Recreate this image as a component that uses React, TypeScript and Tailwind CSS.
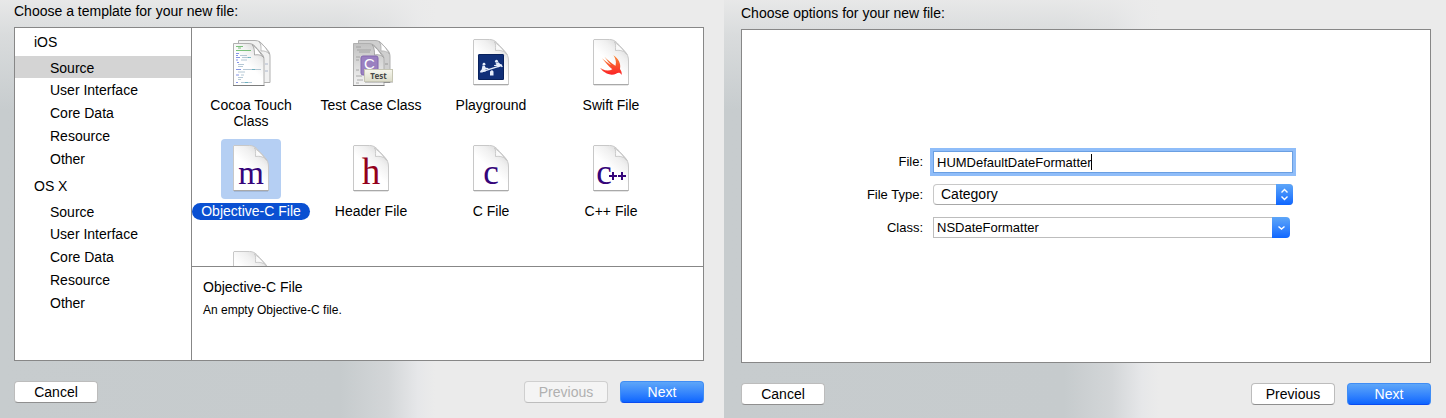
import type { ReactNode } from "react";

const BACKDROP =
  "bg-[linear-gradient(to_bottom,rgba(235,235,235,0.9)_0px,rgba(235,235,235,0.5)_35px,rgba(235,235,235,0)_110px),linear-gradient(to_right,#c7ccce_0px,#c6cbcd_340px,#d3d6d8_388px,#e6e7e9_418px,#ebebeb_435px)]";

function Page() {
  return (
    <g>
      <path
        d="M13 6.5H28.5C33 6.5 35.5 9 38.5 12.5L44 18.5C46.500 21.500 47.500 23.500 47.500 28V51.500H12.500V7Z"
        fill="url(#paper)"
        stroke="#c8c8c8"
      />
      <path d="M12.500 51.500H47.500" stroke="#a9a9a9" />
      <path d="M13 52.500H47" stroke="#000" strokeOpacity=".1" />
      <path
        d="M33.500 9C35 11 34.500 13 34.500 17.500C39 17 43 17.500 46 21.500L39.500 14Z"
        fill="#fafafa"
        stroke="#c0c0c0"
        strokeWidth=".8"
      />
    </g>
  );
}

function Stack({ dark }: { dark?: boolean }) {
  const line = dark ? "#8c8c8c" : "#9fabc4";
  return (
    <g>
      <path
        d="M17.500 7.500H34C38 7.500 40 9.500 42 12L46 16.500C48.500 19 49 21 49 24V49.500H17.500Z"
        fill={dark ? "#cfcfcf" : "#f1f1f1"}
        stroke="#b0b0b0"
      />
      <path d="M38 8.500C40.500 11.500 40 14.500 40 18C43 17.500 46 18.500 48.500 21L44 14Z" fill="#fff" stroke="#a4a4a4" strokeWidth=".7" />
      <path d="M44 31H47M44 38H47" stroke={line} strokeWidth=".8" />
      <path
        d="M12.500 10.500H28C32 10.500 34 13 36 15.500L40 20C42.500 22.500 43 24 43 27V52.500H12.500Z"
        fill={dark ? "url(#greyPaper)" : "url(#paper)"}
        stroke="#b0b0b0"
      />
      <path d="M12 52.500H43.500" stroke="#7d7d7d" />
      <path
        d="M31 11.500C33.500 14.500 33.500 18 33.500 22C37 21.500 40 21.500 42.500 24.500L36.500 16.500Z"
        fill="#fff"
        stroke="#989898"
        strokeWidth=".8"
      />
    </g>
  );
}

function CocoaIcon() {
  return (
    <g>
      <Stack />
      <g strokeWidth=".9" strokeOpacity=".8" fill="none">
        <path d="M15 13.500H22M17 15H20M15 17.500H30" stroke="#48ad48" />
        <path d="M15 20.500H18M15 22.500H17M15 24.500H19M15 27H17M16 29.500H18M15 36.500H20M15 42H18M15 49.500H17" stroke="#5368dc" />
        <path d="M19 22.500H26M21 24.500H28M20 27H26M17 31.500H23M17 33.500H22M22 36.500H40M17 39H24M20 42H23M17 44.500H22M17 46.500H20M20 49.500H31" stroke="#98b3c4" />
        <path d="M27 24.500H30M31 36.500H34M24 49.500H27" stroke="#4fa6b5" />
      </g>
    </g>
  );
}

function TestIcon() {
  return (
    <g>
      <Stack dark />
      <path d="M15 14H20M16 17H30M18 19H29M15 24H19M15 27H18M15 37H18M15 43H21M16 47H22M15 50H18" stroke="#999" strokeWidth=".8" />
      <rect x="20" y="23" width="17" height="19" rx="2" fill="#9a80c0" stroke="#8267ad" />
      <text x="28.500" y="36" textAnchor="middle" fill="#fff" className="font-['Liberation_Sans'] text-[15px]">
        C
      </text>
      <rect x="24" y="37" width="28" height="13" fill="#000" fillOpacity=".18" />
      <rect x="23.500" y="36.500" width="28" height="12" fill="url(#tag)" stroke="#c6c6b4" />
      <text x="37.500" y="45.500" textAnchor="middle" fill="#484848" className="font-['Noto_Sans','Liberation_Sans',sans-serif] text-[8px] font-bold">
        Test
      </text>
    </g>
  );
}

function PlaygroundIcon() {
  return (
    <g>
      <Page />
      <rect x="17" y="21" width="26" height="26" rx="1.500" fill="#102f78" />
      <rect x="17.500" y="21.500" width="25" height="25" rx="1" fill="none" stroke="#08215c" />
      <g fill="#e4ecfa">
        <path d="M20 38.200L40.500 31.800L41 33L20.500 39.600Z" />
        <path d="M29 38.500L31 37L32.500 38.500V42.500H29Z" />
        <circle cx="23" cy="31.200" r="1.400" />
        <path d="M21.500 32.500L23.800 33L24.800 34.800L27.500 35L27.300 36L24.500 36.300L25 38.200L21.500 39.200L19 39.400L19.200 38L20.700 36.500Z" />
        <circle cx="35.500" cy="28.300" r="1.500" />
        <path d="M34.500 30.500L37.500 29.200L39.200 31L40.500 31.300L41.800 33.800L40.800 34.200L39.500 33L37 34.500L36.300 33L33.200 33L33 31.900L35.500 31.800Z" />
      </g>
    </g>
  );
}

function SwiftIcon() {
  return (
    <g>
      <Page />
      <path
        transform="translate(16.100 18.200) scale(1.200)"
        fill="url(#swift)"
        d="M13.543 3.41c4.114 2.47 6.545 7.162 5.549 11.131-.024.093-.05.181-.076.272l.002.001c2.062 2.538 1.500 5.258 1.236 4.745-1.072-2.086-3.066-1.568-4.088-1.043a6.803 6.803 0 0 1-.281.158l-.02.012-.002.002c-2.115 1.123-4.957 1.205-7.812-.022a12.568 12.568 0 0 1-5.640-4.838c.649.480 1.350.902 2.097 1.252 3.019 1.414 6.051 1.311 8.197-.002C9.651 12.730 7.101 9.670 5.146 7.191a10.628 10.628 0 0 1-1.005-1.384c2.340 2.142 6.038 4.830 7.365 5.576C8.690 8.408 6.208 4.743 6.324 4.860c4.436 4.466 8.527 6.996 8.527 6.996.154.085.270.154.360.213.085-.215.160-.437.224-.668.708-2.588-.090-5.548-1.893-7.992z"
      />
    </g>
  );
}

function Letter({ x, className, children }: { x: number; className: string; children: ReactNode }) {
  return (
    <text x={x} y="45" textAnchor="middle" className={`font-['Liberation_Serif',serif] ${className}`}>
      {children}
    </text>
  );
}

type Template = { label: string; icon: ReactNode; selected?: boolean };

const templates: Template[] = [
  { label: "Cocoa Touch Class", icon: <CocoaIcon /> },
  { label: "Test Case Class", icon: <TestIcon /> },
  { label: "Playground", icon: <PlaygroundIcon /> },
  { label: "Swift File", icon: <SwiftIcon /> },
  {
    label: "Objective-C File",
    selected: true,
    icon: (
      <g>
        <Page />
        <Letter x={30} className="fill-[#35057a] text-[33px]">m</Letter>
      </g>
    ),
  },
  {
    label: "Header File",
    icon: (
      <g>
        <Page />
        <Letter x={30} className="fill-[#93001b] text-[37px]">h</Letter>
      </g>
    ),
  },
  {
    label: "C File",
    icon: (
      <g>
        <Page />
        <Letter x={30} className="fill-[#35057a] text-[35px]">c</Letter>
      </g>
    ),
  },
  {
    label: "C++ File",
    icon: (
      <g>
        <Page />
        <Letter x={23} className="fill-[#35057a] text-[35px]">c</Letter>
        <path d="M28 37H36M32 33V41M37 37H45M41 33V41" stroke="#35057a" strokeWidth="2" />
      </g>
    ),
  },
  { label: "", icon: <Page /> },
];

const sections = ["iOS", "OS X"];
const groups = ["Source", "User Interface", "Core Data", "Resource", "Other"];

function SharedPaint() {
  return (
    <svg width="0" height="0" className="absolute" aria-hidden="true">
      <defs>
        <linearGradient id="paper" x1=".8" y1="0" x2=".45" y2=".5">
          <stop offset="0" stopColor="#d2d2d2" />
          <stop offset=".5" stopColor="#f0f0f0" />
          <stop offset="1" stopColor="#fff" />
        </linearGradient>
        <linearGradient id="greyPaper" x1="0" y1="0" x2="0" y2="1">
          <stop offset="0" stopColor="#c2c2c2" />
          <stop offset="1" stopColor="#f4f4f4" />
        </linearGradient>
        <linearGradient id="tag" x1="0" y1="0" x2="0" y2="1">
          <stop offset="0" stopColor="#f7f7ee" />
          <stop offset="1" stopColor="#dcdcca" />
        </linearGradient>
        <linearGradient id="swift" x1="0" y1="0" x2="0" y2="1">
          <stop offset="0" stopColor="#f98a35" />
          <stop offset="1" stopColor="#fb2226" />
        </linearGradient>
      </defs>
    </svg>
  );
}

function PushButton({ children, kind = "plain" }: { children: ReactNode; kind?: "plain" | "primary" | "disabled" }) {
  const look = {
    plain: "border-[#bcbcbc] border-b-[#8f8f8f] bg-white text-black",
    primary: "border-[#3f8df5] border-b-[#0a4cf0] bg-linear-to-b from-[#5ea6f8] to-[#0d65ff] text-white",
    disabled: "border-[#cfcfcf] border-b-[#bdbdbd] bg-[#f4f4f4] text-[#b0b0b0]",
  }[kind];
  return (
    <button
      type="button"
      disabled={kind === "disabled"}
      className={`h-[22px] w-[84px] rounded-[4px] border text-[14px] leading-[20px] ${look}`}
    >
      {children}
    </button>
  );
}

function TemplatePane() {
  return (
    <section className={`flex flex-col pr-5 pb-[15px] pl-[14px] ${BACKDROP}`}>
      <h1 className="mb-[4px] text-[14px] leading-[23px]">Choose a template for your new file:</h1>
      <div className="flex flex-1 border border-[#878787] bg-white">
        <nav className="w-[177px] shrink-0 border-r border-[#878787]">
          {sections.map((section, s) => (
            <div key={section} className="mb-[2px]">
              <h2 className="pl-[19px] text-[14px] leading-[28px]">{section}</h2>
              <ul>
                {groups.map((group, g) => (
                  <li key={group}>
                    <a
                      href="#"
                      className={`block pl-[35px] text-[14px] leading-[25px] ${g === 0 ? "h-[22px]" : "h-[23px]"} ${
                        s === 0 && g === 0 ? "bg-[#d4d4d4]" : ""
                      }`}
                    >
                      {group}
                    </a>
                  </li>
                ))}
              </ul>
            </div>
          ))}
        </nav>
        <div className="flex min-w-0 flex-1 flex-col">
          <div className="h-[238px] overflow-hidden">
            <div className="grid auto-rows-[106px] grid-cols-[repeat(4,118px)] gap-x-[2px] pt-[5px]">
              {templates.map(({ label, icon, selected }) => (
                <button key={label} type="button" aria-label={label || "Template"} className="flex flex-col items-center gap-[4px]">
                  <svg
                    viewBox="0 0 60 60"
                    fill="none"
                    className={`size-[60px] shrink-0 rounded-[4px] ${selected ? "bg-[#b5cff3]" : ""}`}
                  >
                    {icon}
                  </svg>
                  {label && (
                    <span
                      className={`text-[14px] leading-[16px] ${
                        selected ? "w-full rounded-full bg-[#0a50d2] pb-px text-white" : "px-1"
                      }`}
                    >
                      {label}
                    </span>
                  )}
                </button>
              ))}
            </div>
          </div>
          <div className="flex-1 border-t border-[#878787] px-[11px] pt-[11px]">
            <h3 className="text-[14px] leading-[18px]">Objective-C File</h3>
            <p className="mt-[5px] text-[12px] leading-[18px]">An empty Objective-C file.</p>
          </div>
        </div>
      </div>
      <div className="mt-5 flex gap-3">
        <PushButton>Cancel</PushButton>
        <div className="flex-1" />
        <PushButton kind="disabled">Previous</PushButton>
        <PushButton kind="primary">Next</PushButton>
      </div>
    </section>
  );
}

const BLUE = "bg-linear-to-b from-[#5ea6f8] to-[#0d65ff]";
const LABEL = "text-right text-[13px] leading-[22px]";

function OptionsPane() {
  return (
    <section className={`flex flex-col pt-[2px] pr-[15px] pb-[13px] pl-[17px] ${BACKDROP}`}>
      <h1 className="mb-[4px] text-[14px] leading-[23px]">Choose options for your new file:</h1>
      <div className="flex flex-1 items-center justify-center border border-[#878787] bg-white pr-[18px] pb-[2px]">
        <form className="grid grid-cols-[62px_360px] gap-x-[10px] gap-y-[11px]">
          <label htmlFor="file" className={LABEL}>
            File:
          </label>
          <div className="relative">
            <input
              id="file"
              defaultValue="HUMDefaultDateFormatter"
              className="block h-[22px] w-full border border-[#6a9fe2] bg-white px-[3px] text-[13px] leading-[20px] ring-3 ring-[#8fbdf9] outline-none"
            />
            <span aria-hidden="true" className="absolute top-[3px] left-[158px] h-4 w-px bg-black" />
          </div>
          <label htmlFor="type" className={LABEL}>
            File Type:
          </label>
          <div className="relative">
            <select
              id="type"
              className="block h-[21px] w-full appearance-none rounded-[4px] border border-[#c8c8c8] border-b-[#a8a8a8] bg-white px-[7px] text-[14px] leading-[19px]"
            >
              <option>Category</option>
            </select>
            <span className={`pointer-events-none absolute top-0 right-0 flex h-[21px] w-[17px] items-center justify-center rounded-r-[4px] ${BLUE}`}>
              <svg viewBox="0 0 9 13" className="h-[13px] w-[9px]" fill="none" stroke="#fff" strokeWidth="1.400">
                <path d="M1.500 4.500L4.500 1.500L7.500 4.500M1.500 8.500L4.500 11.500L7.500 8.500" />
              </svg>
            </span>
          </div>
          <label htmlFor="class" className={LABEL}>
            Class:
          </label>
          <div className="mr-[3px] flex h-[21px]">
            <input
              id="class"
              defaultValue="NSDateFormatter"
              className="min-w-0 flex-1 border border-r-0 border-[#bdbdbd] bg-white px-[3px] text-[13px] leading-[19px] outline-none"
            />
            <button type="button" aria-label="Show classes" className={`flex w-[18px] items-center justify-center rounded-r-[4px] ${BLUE}`}>
              <svg viewBox="0 0 9 6" className="h-[6px] w-[9px]" fill="none" stroke="#fff" strokeWidth="1.400">
                <path d="M1.500 1.500L4.500 4L7.500 1.500" />
              </svg>
            </button>
          </div>
        </form>
      </div>
      <div className="mt-5 flex gap-3">
        <PushButton>Cancel</PushButton>
        <div className="flex-1" />
        <PushButton>Previous</PushButton>
        <PushButton kind="primary">Next</PushButton>
      </div>
    </section>
  );
}

export default function App() {
  return (
    <main className="grid min-h-screen grid-cols-[724fr_722fr] bg-[#ebebeb] font-['Liberation_Sans',Arial,sans-serif] text-black">
      <SharedPaint />
      <TemplatePane />
      <OptionsPane />
    </main>
  );
}
